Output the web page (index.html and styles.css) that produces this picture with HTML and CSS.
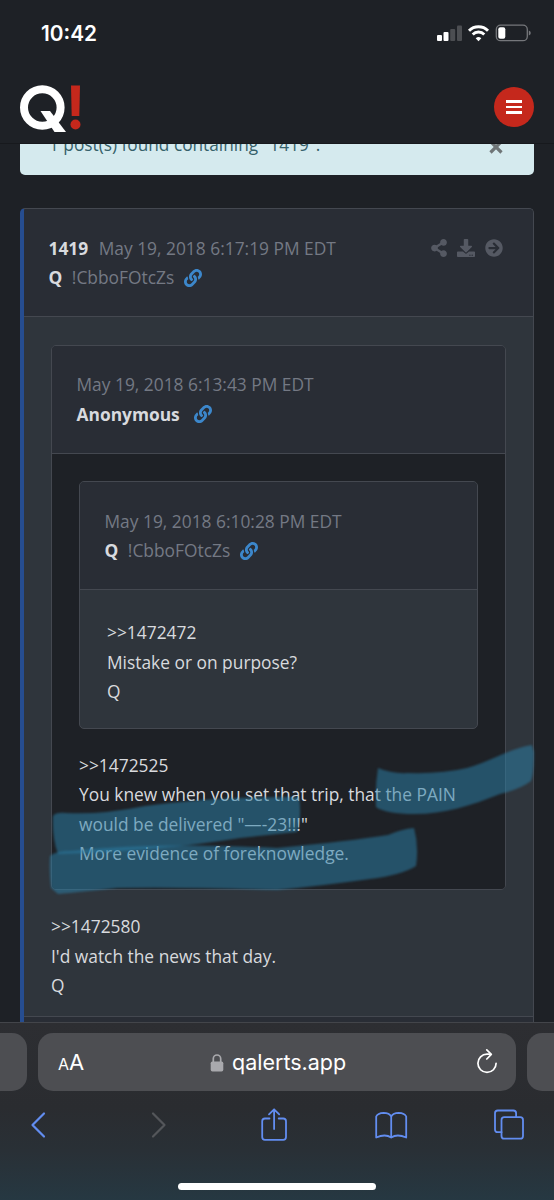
FILE: index.html
```html
<!DOCTYPE html>
<html lang="en">
<head>
<meta charset="utf-8">
<title>Q! - qalerts.app</title>
<link rel="stylesheet" href="styles.css">
</head>
<body>
<svg class="defs" aria-hidden="true">
  <symbol id="link" viewBox="0 0 512 512"><path d="M326.612 185.391c59.747 59.809 58.927 155.698.36 214.59-.11.12-.24.25-.36.37l-67.2 67.2c-59.27 59.27-155.699 59.262-214.96 0-59.27-59.26-59.27-155.7 0-214.96l37.106-37.106c9.84-9.84 26.786-3.3 27.294 10.606.648 17.722 3.826 35.527 9.69 52.721 1.986 5.822.567 12.262-3.783 16.612l-13.087 13.087c-28.026 28.026-28.905 73.66-1.155 101.96 28.024 28.579 74.086 28.749 102.325.51l67.2-67.19c28.191-28.191 28.073-73.757 0-101.83-3.701-3.694-7.429-6.564-10.341-8.569a16.037 16.037 0 0 1-6.947-12.606c-.396-10.567 3.348-21.456 11.698-29.806l21.054-21.055c5.521-5.521 14.182-6.199 20.584-1.731a152.482 152.482 0 0 1 20.522 17.197zM467.547 44.449c-59.261-59.262-155.69-59.27-214.96 0l-67.2 67.2c-.12.12-.25.25-.36.37-58.566 58.892-59.387 154.781.36 214.59a152.454 152.454 0 0 0 20.521 17.196c6.402 4.468 15.064 3.789 20.584-1.731l21.054-21.055c8.35-8.35 12.094-19.239 11.698-29.806a16.037 16.037 0 0 0-6.947-12.606c-2.912-2.005-6.64-4.875-10.341-8.569-28.073-28.073-28.191-73.639 0-101.83l67.2-67.19c28.239-28.239 74.3-28.069 102.325.51 27.75 28.3 26.872 73.934-1.155 101.96l-13.087 13.087c-4.35 4.35-5.769 10.79-3.783 16.612 5.864 17.194 9.042 34.999 9.69 52.721.509 13.906 17.454 20.446 27.294 10.606l37.106-37.106c59.271-59.259 59.271-155.699.001-214.959z"/></symbol>
</svg>
<div class="screen">
  <header class="top">
    <div class="status">
      <span class="time">10:42</span>
      <svg class="status-icons" width="96" height="20" viewBox="0 0 96 20">
        <rect x="2" y="11" width="5" height="6" rx="1" fill="#fff"/>
        <rect x="8.500" y="8" width="5" height="9" rx="1" fill="#fff"/>
        <rect x="15.200" y="5" width="5" height="12" rx="1" fill="#4c4e52"/>
        <rect x="22" y="1.500" width="5" height="15.500" rx="1" fill="#4c4e52"/>
        <g fill="none" stroke="#fff" stroke-width="2.900"><path d="M34 6.700A13.500 13.500 0 0 1 53 6.700"/><path d="M37.700 10.400A8.200 8.200 0 0 1 49.300 10.400"/></g>
        <path d="M43.500 17.200l-2.800-2.900q2.800-2.400 5.600 0z" fill="#fff"/>
        <rect x="61.300" y="1.200" width="31" height="15.500" rx="4.300" fill="none" stroke="#75777b" stroke-width="1.300"/>
        <rect x="63.300" y="3.300" width="7" height="11.500" rx="2" fill="#fff"/>
        <path d="M93.800 6.500q2 .8 2 2.500t-2 2.500z" fill="#75777b"/>
      </svg>
    </div>
    <div class="brand">
      <svg class="logo" width="62" height="50" viewBox="0 0 62 50">
        <circle cx="22.300" cy="23.500" r="18.300" fill="none" stroke="#fff" stroke-width="8"/>
        <path d="M20.500 27h9.500L46 48H34.500z" fill="#fff"/>
        <path d="M51 1.500h9l-.7 30.500h-7.600z" fill="#c5281c"/><circle cx="55.500" cy="40.500" r="5" fill="#c5281c"/>
      </svg>
      <div class="menu"><i></i><i></i><i></i></div>
    </div>
  </header>
  <main class="page">
    <div class="alert"><span>1 post(s) found containing "1419".</span>
      <svg width="16" height="16" viewBox="0 0 16 16"><path d="M2.500 2.500l11 11m0-11l-11 11" stroke="#6f7577" stroke-width="3.200"/></svg>
    </div>
    <article class="card outer">
      <div class="head">
        <div class="row"><span><b>1419</b><span class="date">May 19, 2018 6:17:19 PM EDT</span></span>
          <span class="actions">
            <svg width="16" height="18" viewBox="0 0 448 512"><path d="M352 320c-22.608 0-43.387 7.819-59.79 20.895l-102.486-64.054a96.551 96.551 0 0 0 0-41.683l102.486-64.054C308.613 184.181 329.392 192 352 192c53.019 0 96-42.981 96-96S405.019 0 352 0s-96 42.981-96 96c0 7.158.79 14.13 2.276 20.841L155.79 180.895C139.387 167.819 118.608 160 96 160c-53.019 0-96 42.981-96 96s42.981 96 96 96c22.608 0 43.387-7.819 59.79-20.895l102.486 64.054A96.301 96.301 0 0 0 256 416c0 53.019 42.981 96 96 96s96-42.981 96-96-42.981-96-96-96z"/></svg>
            <svg width="18" height="18" viewBox="0 0 512 512"><path d="M216 0h80c13.300 0 24 10.700 24 24v168h87.700c17.800 0 26.700 21.500 14.100 34.100L269.700 378.300c-7.500 7.500-19.800 7.500-27.300 0L90.100 226.100c-12.600-12.600-3.700-34.100 14.100-34.100H192V24c0-13.300 10.700-24 24-24zm296 376v112c0 13.300-10.700 24-24 24H24c-13.300 0-24-10.700-24-24V376c0-13.300 10.700-24 24-24h146.700l49 49c20.100 20.100 52.500 20.100 72.600 0l49-49H488c13.300 0 24 10.700 24 24zm-124 88c0-11-9-20-20-20s-20 9-20 20 9 20 20 20 20-9 20-20zm64 0c0-11-9-20-20-20s-20 9-20 20 9 20 20 20 20-9 20-20z"/></svg>
            <svg width="18" height="18" viewBox="0 0 512 512"><path d="M256 8c137 0 248 111 248 248S393 504 256 504 8 393 8 256 119 8 256 8zm-28.900 143.600l75.500 72.400H120c-13.300 0-24 10.700-24 24v16c0 13.300 10.700 24 24 24h182.600l-75.500 72.400c-9.700 9.300-9.900 24.800-.4 34.300l11 10.900c9.400 9.400 24.600 9.400 33.900 0L404.300 273c9.400-9.400 9.400-24.600 0-33.900L271.600 106.300c-9.400-9.400-24.600-9.400-33.900 0l-11 10.900c-9.500 9.600-9.300 25.100.4 34.400z"/></svg>
          </span></div>
        <div class="user"><b>Q</b><span class="trip">!CbboFOtcZs</span><svg class="link"><use href="#link"/></svg></div>
      </div>
      <div class="body">
        <article class="card middle">
          <div class="head">
            <div class="date">May 19, 2018 6:13:43 PM EDT</div>
            <div class="user anon"><b>Anonymous</b><svg class="link"><use href="#link"/></svg></div>
          </div>
          <div class="body dark">
            <article class="card">
              <div class="head">
                <div class="date">May 19, 2018 6:10:28 PM EDT</div>
                <div class="user"><b>Q</b><span class="trip">!CbboFOtcZs</span><svg class="link"><use href="#link"/></svg></div>
              </div>
              <div class="body quote"><p>&gt;&gt;1472472</p><p>Mistake or on purpose?</p><p>Q</p></div>
            </article>
            <p>&gt;&gt;1472525</p><p>You knew when you set that trip, that the PAIN</p><p>would be delivered "—-23!!!"</p><p>More evidence of foreknowledge.</p>
          </div>
        </article>
        <p>&gt;&gt;1472580</p><p>I'd watch the news that day.</p><p>Q</p>
      </div>
      <div class="foot"></div>
    </article>
  </main>
  <footer class="browser">
    <div class="tabs">
      <div class="tab side"></div>
      <div class="tab address">
        <span class="aa"><small>A</small>A</span>
        <span class="url"><svg width="14" height="20" viewBox="0 0 14 20"><path d="M3.300 9V5.700a3.700 3.700 0 0 1 7.400 0V9" fill="none" stroke="#a9a9ad" stroke-width="1.700"/><rect x=".7" y="8.500" width="12.600" height="10" rx="1.700" fill="#a9a9ad"/></svg>qalerts.app</span>
        <svg width="22" height="26" viewBox="0 0 22 26"><g fill="none" stroke="#fff" stroke-width="1.700" stroke-linecap="round" stroke-linejoin="round"><path d="M14.500 5.200H11A9.100 9.100 0 1 0 20.100 14.300"/><path d="M10.800 .9l4.500 4.400-4.500 4.700"/></g></svg>
      </div>
      <div class="tab side"></div>
    </div>
    <svg class="tools" width="554" height="40" viewBox="0 0 554 40">
      <g fill="none" stroke="#628df0" stroke-width="1.800" stroke-linecap="round" stroke-linejoin="round">
        <path d="M44 8.500L32.500 20 44 31.500" stroke-width="2.200"/>
        <path d="M153 8.500l11.500 11.500L153 31.500" stroke="#54565a" stroke-width="2.200"/>
        <path d="M269.500 13.500H265q-2.800 0-2.800 2.800V32q0 2.800 2.800 2.800h18.200q2.800 0 2.800-2.800V16.300q0-2.800-2.800-2.800h-4.500M274.100 24V4.500M269 9.300l5.100-5 5.100 5"/>
        <path d="M376.200 11.500q1.500-3.500 7.500-3.700 5.500 0 7.500 3.700 2-3.700 7.500-3.700 6 .2 7.500 3.700V32.500q-9-4-15 0-6-4-15 0zM391.200 11.500V32"/>
        <rect x="501.500" y="12.100" width="21.500" height="21.600" rx="2.800"/>
        <path d="M501.500 27.200h-3.700q-2.800 0-2.800-2.800V8.300q0-2.800 2.800-2.800h15.500q2.800 0 2.800 2.800v3.500"/>
      </g>
    </svg>
    <div class="home"></div>
  </footer>
  <svg class="marker" width="554" height="1200" viewBox="0 0 554 1200">
    <path d="M378 768Q392 774 408 773Q442 774 467 768C492 761 511 748 532 745L534 752Q534 774 531 781Q521 789 500 794C470 806 445 814 414 814Q386 814 376 807Q375 786 378 768z"/>
    <path d="M53 816Q56 812 66 813Q100 815 145 806Q220 796 299 797Q302 817 297 832L240 838Q160 851 58 854Q52 838 53 816z"/>
    <path d="M50 856Q55 851 72 851Q160 842 277 848Q350 841 388 835Q402 829 414 828Q419 846 416 866Q402 875 370 879Q320 886 277 890Q190 887 118 888Q80 892 58 894L51 888Q49 872 50 856z"/>
  </svg>
</div>
</body>
</html>
```
FILE: styles.css
```css
* { box-sizing: border-box; }
body { margin: 0; background: #1e2126; }
.defs { position: absolute; width: 0; height: 0; }
.screen { position: relative; width: 554px; height: 1200px; overflow: hidden; display: flex; flex-direction: column; font: 17.36px/29.5px "Open Sans", "Noto Sans", sans-serif; color: #d8dade; }
.top { height: 144px; flex: none; background: #1e2126; border-bottom: 1px solid #17191d; }
.status { display: flex; justify-content: space-between; height: 68px; padding: 24px 23px 0 41px; }
.time { font: 600 20.8px/20px Inter, sans-serif; color: #fff; }
.brand { display: flex; justify-content: space-between; align-items: center; padding: 0 20px 0 20px; height: 78px; }
.logo { margin-top: 3px; }
.menu { display: flex; flex-direction: column; justify-content: center; align-items: center; gap: 3px; width: 40px; height: 40px; border-radius: 50%; background: #c5281c; }
.menu i { width: 16px; height: 2.6px; background: #fff; }
.page { flex: 1; min-height: 0; overflow: hidden; padding: 0 20px; }
.alert { display: flex; justify-content: space-between; height: 64px; margin-top: -33px; margin-bottom: 33px; padding: 19px 30px 0 29px; background: #d5eaee; border-radius: 5px; color: #36616a; font-size: 17.25px; }
.alert svg { margin-top: 9px; }
.card { border: 1px solid #444850; border-radius: 5px; background: #2f353c; overflow: hidden; }
.outer { border-left: 4px solid #264d90; border-bottom: 0; height: 820px; }
.head { height: 108px; padding: 24.7px 24.5px 0; background: #292d35; border-bottom: 1px solid #444850; }
.body { padding: 27.400px 27px 20.5px; }
.outer > .body { padding-top: 27.5px; padding-bottom: 15px; }
.quote { padding-top: 28.2px; padding-bottom: 21px; }
.body p { margin: 0; white-space: nowrap; }
.body .card { margin-bottom: 22.2px; }
.dark { background: #1e2126; }
.row { display: flex; justify-content: space-between; align-items: center; }
.row .date { margin-left: 10.5px; }
.date, .trip { color: #747984; }
.actions { display: flex; gap: 10px; margin-right: 6px; fill: #555963; }
.user { display: flex; align-items: center; }
.user .trip { margin-left: 9.5px; }
.link { width: 18px; height: 18px; margin-left: 10px; fill: #3c87cb; }
.anon .link { margin-left: 14.5px; }
.foot { height: 20px; background: #292d35; border-top: 1px solid #444850; }
.browser { height: 178px; flex: none; border-top: 1px solid #43454a; background: linear-gradient(#2d2e32, #2a2c30 48%, #293036 72%, #263842); font-family: Inter, sans-serif; color: #fff; }
.tabs { display: flex; gap: 11px; margin: 10px -74px 0; height: 58px; }
.tab { background: #4d4e52; border-radius: 15px; }
.side { width: 101px; flex: none; }
.address { flex: 1; display: flex; align-items: center; justify-content: space-between; padding: 0 18px 0 20px; }
.aa { font-size: 22px; padding-top: 3px; }
.aa small { font-size: 16px; }
.url { display: flex; align-items: center; gap: 8px; font-size: 21.5px; margin-right: 4px; padding-top: 2px; }
.tools { display: block; margin-top: 14px; }
.home { width: 198px; height: 7px; margin: 38px auto 0; border-radius: 4px; background: #fff; }
.marker { position: absolute; left: 0; top: 0; fill: rgba(44, 127, 167, .53); filter: blur(1px); }
```
